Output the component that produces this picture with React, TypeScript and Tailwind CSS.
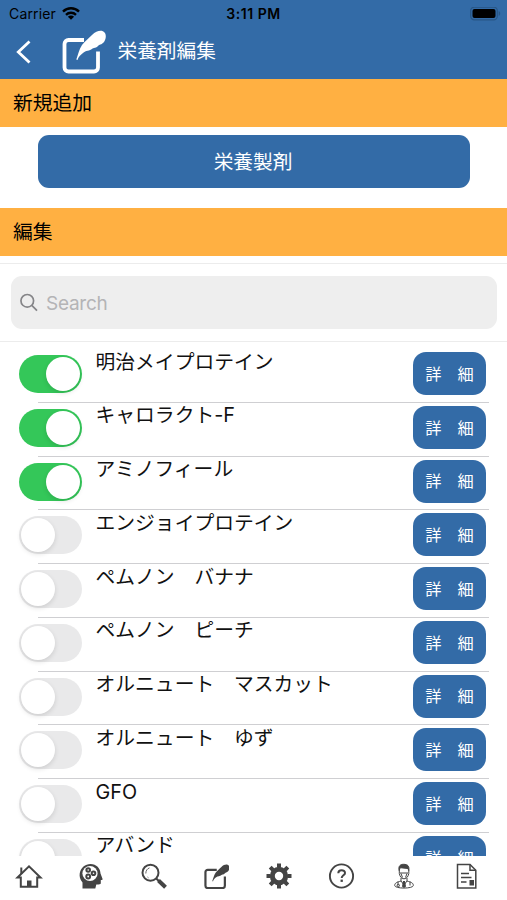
import { useState } from "react";

interface Nutrient {
  name: string;
  enabled: boolean;
}

const NUTRIENTS: Nutrient[] = [
  { name: "明治メイプロテイン", enabled: true },
  { name: "キャロラクト-F", enabled: true },
  { name: "アミノフィール", enabled: true },
  { name: "エンジョイプロテイン", enabled: false },
  { name: "ペムノン　バナナ", enabled: false },
  { name: "ペムノン　ピーチ", enabled: false },
  { name: "オルニュート　マスカット", enabled: false },
  { name: "オルニュート　ゆず", enabled: false },
  { name: "GFO", enabled: false },
  { name: "アバンド", enabled: false },
];

function StatusBar() {
  return (
    <div className="grid h-[27px] grid-cols-3 items-center pl-[9px] pr-[6px] text-black">
      <div className="flex items-center gap-[6px]">
        <span className="text-[14px] tracking-[0.15px]">Carrier</span>
        <svg width="18" height="13" viewBox="0 0 18 13" fill="none" stroke="currentColor" strokeWidth="2.4">
          <path d="M1 4.6a11.4 11.4 0 0 1 16 0" />
          <path d="M4 7.8a7.2 7.2 0 0 1 10 0" />
          <path d="M9 12.8 5.9 9.7a4.4 4.4 0 0 1 6.2 0z" fill="currentColor" stroke="none" />
        </svg>
      </div>
      <span className="pr-[3px] text-center text-[14px] font-semibold tracking-[0.55px]">3:11 PM</span>
      <svg className="justify-self-end" width="31" height="14" viewBox="0 0 31 14">
        <rect x="0.7" y="0.2" width="26.6" height="12.6" rx="3.6" fill="none" stroke="#285685" strokeWidth="1.2" />
        <rect x="2.5" y="2" width="23" height="9" rx="2" />
        <path d="M28.7 4.1c2 .8 2 4 0 4.800z" fill="#285685" />
      </svg>
    </div>
  );
}

function EditIcon({ className = "" }: { className?: string }) {
  return (
    <svg className={className} viewBox="0 0 44 44" fill="none">
      <path
        d="M22 10H6.500a4 4 0 0 0-4 4v23.500a4 4 0 0 0 4 4h25.500a4 4 0 0 0 4-4V21.500"
        stroke="currentColor"
        strokeWidth="3.800"
      />
      <path
        d="M14.300 29.500C16 25 17 19.500 20 15 23 11 27 8 30 5 33 2 36 .8 38.500.8c3.500 0 5.500 2.500 5.300 6-.3 4-2.500 7.200-5.500 7.700-1.800.3-2.300 2.300-4.300 3-1.500.5-2.500.2-3.800 1.300-2.500 2.200-6.500 1.700-9.200 4.200-2.500 2-4.500 3.500-5.500 7z"
        fill="currentColor"
      />
    </svg>
  );
}

function SectionTitle({ title }: { title: string }) {
  return <h2 className="flex h-12 items-center bg-[#ffb042] pl-[13px] pt-[2px] text-[19.800px] text-black">{title}</h2>;
}

function Toggle({ on, onClick }: { on: boolean; onClick: () => void }) {
  return (
    <button
      role="switch"
      aria-checked={on}
      onClick={onClick}
      className={`mt-[6px] flex h-[38px] w-[63px] shrink-0 items-center rounded-full px-[2px] ${
        on ? "justify-end bg-[#34c759]" : "justify-start bg-[#e9e9ea]"
      }`}
    >
      <span className="size-[34px] rounded-full bg-white shadow-[0_2px_5px_rgba(0,0,0,0.12)]" />
    </button>
  );
}

function NutrientRow({ name, enabled }: Nutrient) {
  const [on, setOn] = useState(enabled);

  return (
    <li className="flex h-[53.750px] shrink-0 flex-col">
      <div className="flex flex-1 items-start pl-[19px] pr-[21px]">
        <Toggle on={on} onClick={() => setOn(!on)} />
        <span className="ml-[13.500px] flex-1 pt-[0.500px] text-[19.800px] leading-[24px] text-[#111]">{name}</span>
        <button className="mt-[3px] h-[43px] w-[73px] rounded-[13px] bg-[#336ba7] pt-px text-[16.200px] text-white">
          詳　細
        </button>
      </div>
      <div className="ml-[38px] mr-[18px] h-px bg-[#cfcfd2]" />
    </li>
  );
}

function TabBar() {
  return (
    <nav className="flex h-11 shrink-0 items-start bg-white pl-[14.500px] pt-[5.500px] text-[#444]">
      {/* home */}
      <svg className="mr-[34.500px] size-7" viewBox="0 0 28 28" fill="none" stroke="currentColor" strokeWidth="2">
        <path d="M2.500 15.500 14 4.300l11.500 11.200h-3.300v9.300H5.800v-9.300z" />
        <path d="M6.300 12V5.500" />
        <path d="M12 25v-6.500h4.500V25z" fill="currentColor" stroke="none" />
      </svg>
      {/* head */}
      <svg className="mr-[34.500px] size-7" viewBox="0 0 28 28">
        <path
          d="M5.500 26.500V20.500C3 17.500 2.300 14.500 2.700 11.500 3.700 5.700 8.200 2 13.500 2c6 0 9.800 4.300 10 9.500l2 5.200c.3.800 0 1.200-1.700 1.300v3c0 1.200-.8 1.500-4.500 1.500l-1 4z"
          fill="currentColor"
        />
        <circle cx="13" cy="11.500" r="7.600" fill="white" />
        <g fill="none" stroke="currentColor" strokeWidth="2">
          <circle cx="11.200" cy="8" r="1.800" />
          <circle cx="16.500" cy="11.300" r="1.800" />
          <circle cx="11.200" cy="14.500" r="1.900" />
        </g>
      </svg>
      {/* search */}
      <svg className="mr-[34.500px] size-7" viewBox="0 0 28 28" fill="none" stroke="currentColor">
        <circle cx="10.500" cy="10.700" r="8" strokeWidth="2" />
        <path d="M5.800 11.500c0-2.800 1.400-4.900 3.700-5.600M7.500 15l1 .8" strokeWidth=".8" />
        <path d="m16.300 16.500 3 3" strokeWidth="2" />
        <path d="m18.500 18.500 7 6.800" strokeWidth="4" />
      </svg>
      {/* edit */}
      <EditIcon className="ml-[1.500px] mr-[35.500px] mt-[2px] size-[25.500px]" />
      {/* settings */}
      <svg className="mr-[34.500px] size-7" viewBox="0 0 28 28" fill="none" stroke="currentColor">
        <circle cx="14" cy="14" r="6.700" strokeWidth="5" />
        <path
          d="M14 1.500v4M14 22.500v4M1.500 14h4M22.500 14h4M5.200 5.200 8 8M20 20l2.800 2.800M5.200 22.800 8 20M20 8l2.800-2.800"
          strokeWidth="4"
        />
      </svg>
      {/* help */}
      <svg className="mr-[34.500px] size-7" viewBox="0 0 28 28" fill="none" stroke="currentColor">
        <circle cx="14.500" cy="14" r="11.600" strokeWidth="1.900" />
        <path d="M11.300 11.300c0-4.300 6.700-4 6.700-.4 0 2.400-3.300 2.400-3.300 5" strokeWidth="2" />
        <path d="M14.700 17.600v2.300" strokeWidth="2.300" />
      </svg>
      {/* doctor */}
      <svg className="mr-[34.500px] size-7" viewBox="0 0 28 28" fill="none" stroke="currentColor">
        <path d="M9.200 8.500C8 4 10.500 2.300 13.500 2.300c4.500 0 6 2 5.200 6.200l-.7-2-7.800-.8z" fill="currentColor" />
        <path d="M9.300 7.500v4c.6 3 2 5.300 4.700 5.300s4.200-2.300 4.800-5.300v-4M10 11h8M11 11.500l1.500 4M17 11.500l-1.500 4" />
        <path d="M11 16v3c-4 1.300-6.200 1.700-6.300 4.500 0 3.400 18.600 3.400 18.600 0 0-2.800-2.300-3.200-6.300-4.500v-3M8 19.500v4M20 19.500v4M11 19l3 4 3-4" />
        <path d="M13 19h2l1 5.500-2 1.500-2-1.500z" fill="currentColor" stroke="none" />
        <circle cx="8.300" cy="23.500" r="1.200" />
      </svg>
      {/* document */}
      <svg className="size-7" viewBox="0 0 28 28" fill="none" stroke="currentColor" strokeWidth="1.500">
        <path d="M5.500 2.500H18l5.800 5.800v17.700H5.500z" />
        <path d="M18 2.500v5.800h5.800M9 11.500h8M9 15.500h10.500M9 20h5.500" />
        <rect x="17.500" y="18" width="4.500" height="5.500" fill="currentColor" stroke="none" />
      </svg>
    </nav>
  );
}

export default function App() {
  return (
    <div className="flex h-[900px] w-[507px] flex-col overflow-hidden bg-white font-['Inter','Noto_Sans_CJK_JP',sans-serif]">
      <header className="h-[79px] shrink-0 bg-[#336ba7]">
        <StatusBar />
        <div className="flex h-[50px] items-center pl-[16px] text-white">
          <svg width="15" height="24" viewBox="0 0 15 24" fill="none" stroke="currentColor" strokeWidth="2.800">
            <path d="M13.500 1.500 2.300 12l11.200 10.500" />
          </svg>
          <EditIcon className="mb-px ml-[30.500px] size-[44px]" />
          <h1 className="ml-[12px] text-[19.700px]">栄養剤編集</h1>
        </div>
      </header>

      <SectionTitle title="新規追加" />
      <div className="h-[81px] shrink-0 pl-[38px] pr-[37px] pt-[8px]">
        <button className="h-[53px] w-full rounded-[11px] bg-[#336ba7] pr-[2px] pt-[2px] text-[19.700px] text-white">
          栄養製剤
        </button>
      </div>
      <SectionTitle title="編集" />

      <div className="mt-[7px] shrink-0 border-y border-[#ececec] pb-[12px] pl-[11px] pr-[10px] pt-[12px]">
        <label className="flex h-[53px] items-center gap-[8px] rounded-[11px] bg-[#eeeeee] pl-[9px] pr-[10px]">
          <svg width="19" height="19" viewBox="0 0 19 19" fill="none" stroke="#858588" strokeWidth="1.800">
            <circle cx="7.700" cy="7.700" r="6.700" />
            <path d="m12.500 12.500 5.500 5.500" />
          </svg>
          <input
            className="w-full bg-transparent pt-[3px] text-[19px] tracking-[-0.25px] outline-none placeholder:text-[#b4b4b6]"
            placeholder="Search"
          />
        </label>
      </div>

      <ul className="mt-[7px] flex min-h-0 flex-1 flex-col overflow-hidden">
        {NUTRIENTS.map((item) => (
          <NutrientRow key={item.name} {...item} />
        ))}
      </ul>
      <TabBar />
    </div>
  );
}
